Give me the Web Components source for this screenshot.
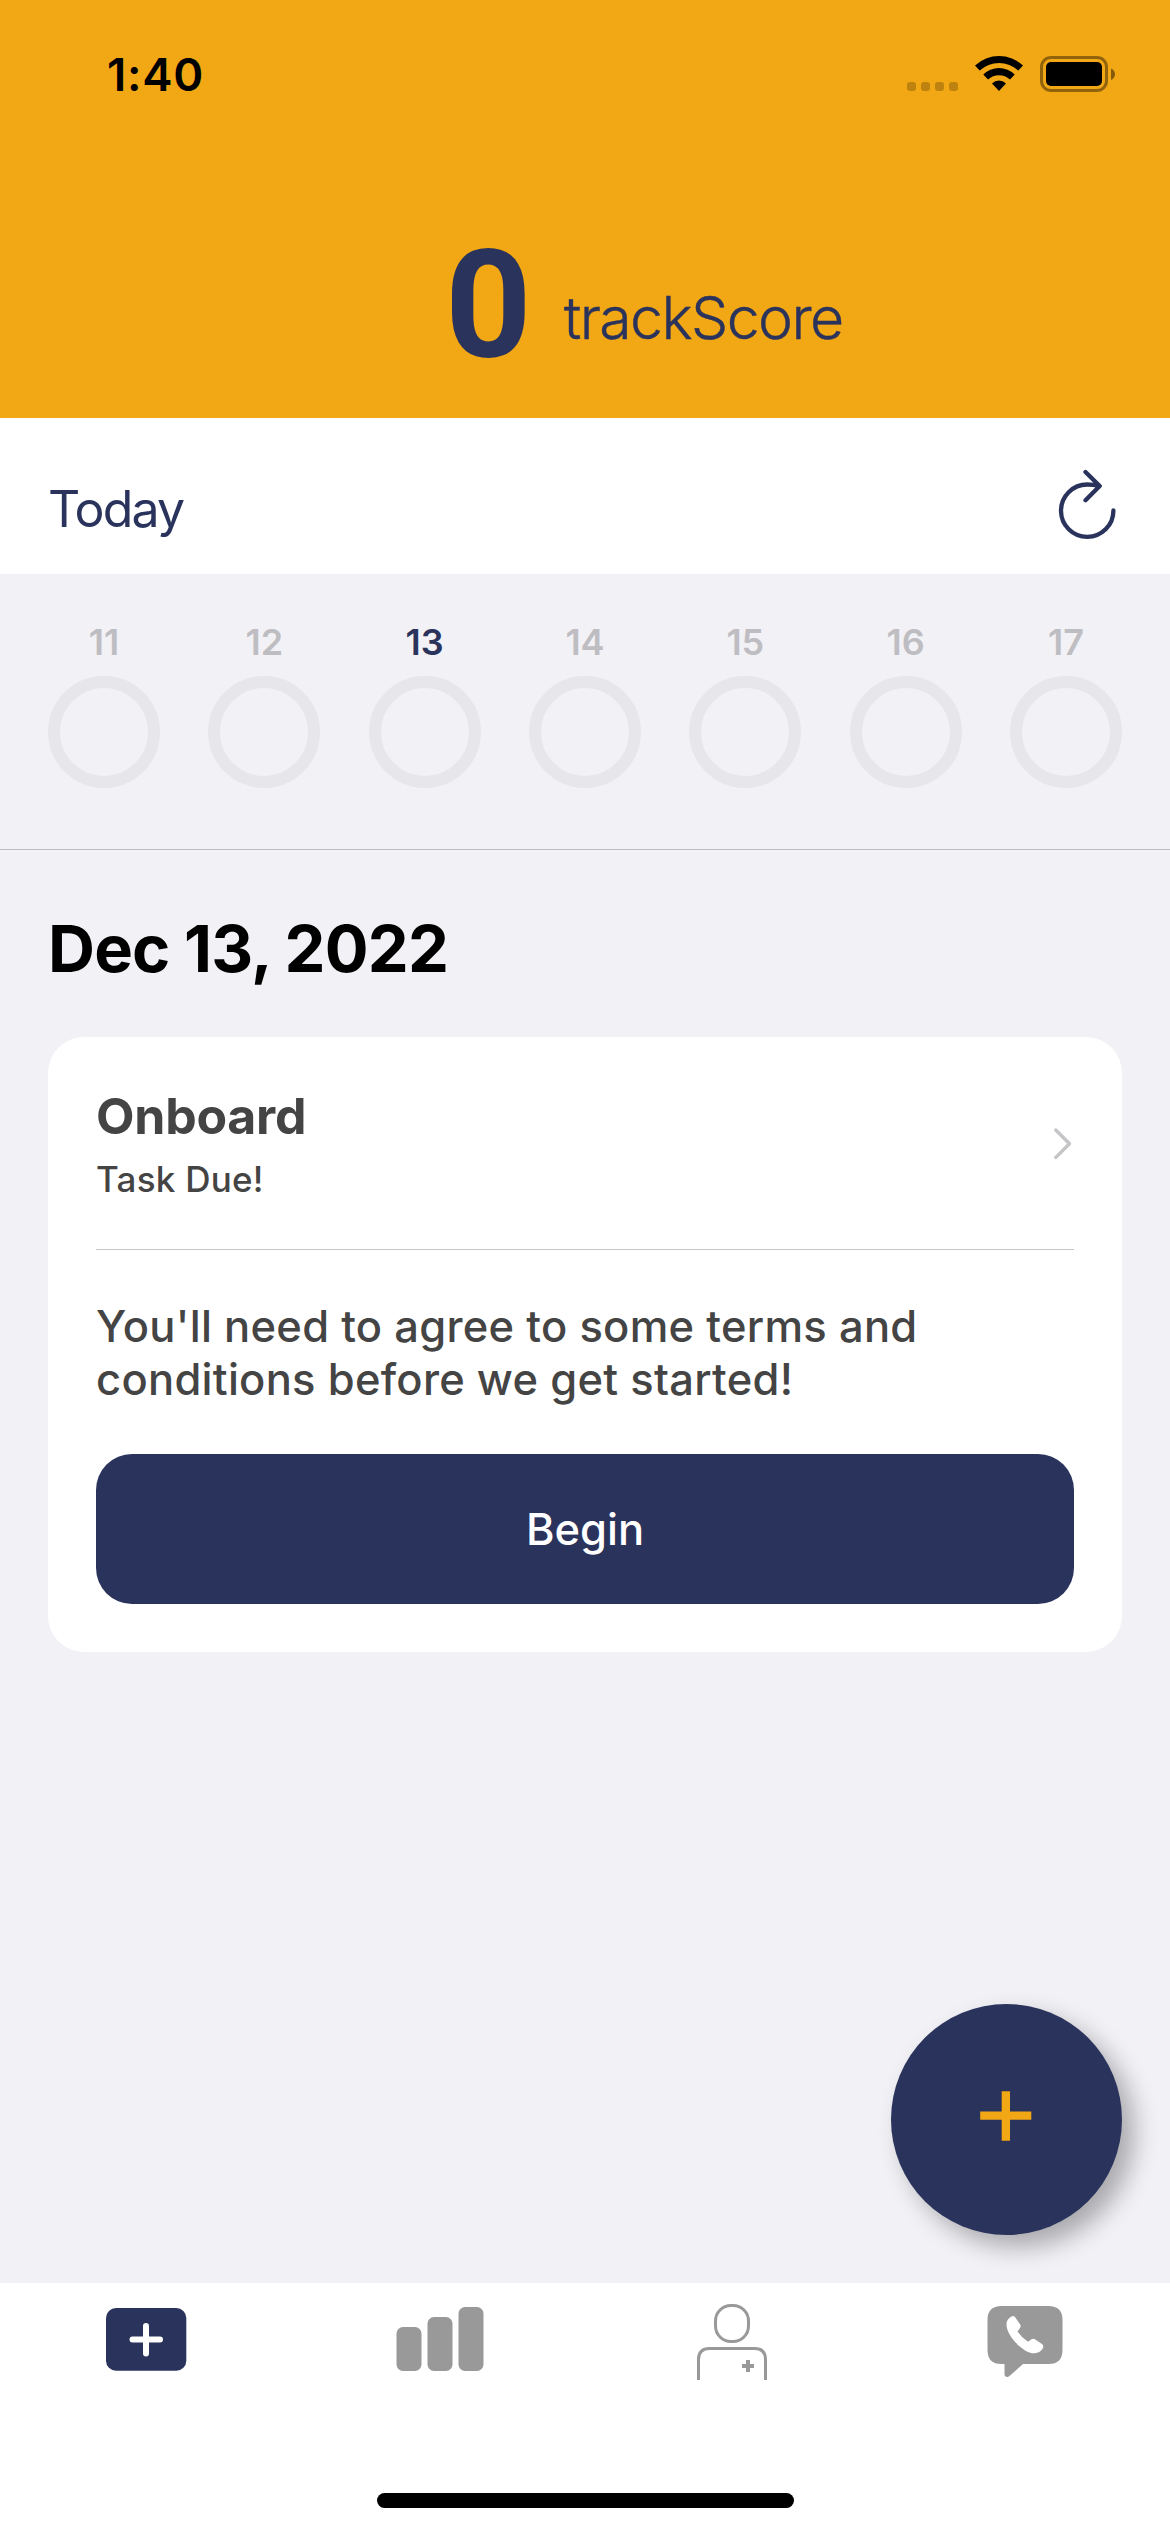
<!DOCTYPE html>
<html lang="en">
<head>
<meta charset="utf-8">
<title>trackScore</title>
<style>
html,body{margin:0;padding:0}
body{width:1170px;height:2532px;overflow:hidden;background:#f2f1f6;font-family:Inter,"Liberation Sans",sans-serif;--navy:#2a335c;--amber:#f2a714;--grey:#999}
</style>
</head>
<body>
<track-app></track-app>
<script>
const define=(name,html)=>customElements.define(name,class extends HTMLElement{
  constructor(){super();const t=document.createElement('template');t.innerHTML=html;this.attachShadow({mode:'open'}).append(t.content.cloneNode(true));}
});

define('status-bar',`<style>
:host{display:flex;height:150px;justify-content:space-between;box-sizing:border-box;padding:0 50px 0 107px}
.t{font-size:45.5px;font-weight:600;line-height:56px;margin-top:47px;color:#000;letter-spacing:.7px}
svg{display:block;margin-top:50px}
</style><div class="t"><slot></slot></div>
<svg width="220" height="50" viewBox="900 50 220 50">
<g fill="#000" fill-opacity=".22"><rect x="907" y="82" width="9" height="9" rx="3"/><rect x="921" y="82" width="9" height="9" rx="3"/><rect x="935" y="82" width="9" height="9" rx="3"/><rect x="949" y="82" width="9" height="9" rx="3"/></g>
<path d="M975 65.5A35 35 0 0 1 1023 65.5L1018.3 70.6A28.5 28.5 0 0 0 979.7 70.6ZM983.3 74.4A22.5 22.5 0 0 1 1014.7 74.4L1010 79.6A16 16 0 0 0 988 79.6ZM992 83.4A10.2 10.2 0 0 1 1006 83.4L999 91Z"/>
<rect x="1041.5" y="57.500" width="65" height="33" rx="9.500" fill="none" stroke="#000" stroke-opacity=".4" stroke-width="3"/>
<rect x="1046" y="62" width="56" height="24" rx="5"/>
<path d="M1111 68.500Q1115 70.500 1115 74.200T1111 80Z" fill-opacity=".45"/></svg>`);

define('score-header',`<style>
:host{display:block;height:418px;background:var(--amber);color:var(--navy)}
.r{display:flex;align-items:flex-start;padding-left:445px;height:268px}
.n{font:700 151px/180px Roboto,sans-serif;margin-top:66px}
.l{font-size:59px;font-weight:300;line-height:70px;margin:133px 0 0 32px;letter-spacing:-1.6px;-webkit-text-stroke:.4px currentColor}
</style><slot name="status"></slot><div class="r"><span class="n"><slot name="score"></slot></span><span class="l"><slot></slot></span></div>`);

define('today-bar',`<style>
:host{display:flex;height:156px;background:#fff;color:var(--navy);justify-content:space-between;box-sizing:border-box;padding:0 48px}
.t{font-size:50px;line-height:60px;margin-top:61px;letter-spacing:-1.8px}
svg{display:block;margin-top:46px}
</style><div class="t"><slot></slot></div>
<svg width="72" height="80" viewBox="1050 464 72 80" fill="none" stroke="#2a335c" stroke-width="4.300" stroke-linecap="round" stroke-linejoin="round"><path d="M1113.400 510.500A26.200 26.200 0 1 1 1087.200 484.500Q1093 484.500 1099.500 486M1085.500 472L1099.700 486L1085.500 500.300"/></svg>`);

define('day-ring',`<style>
:host{display:flex;flex-direction:column;align-items:center;width:112px;color:#bebdc2}
:host([selected]){color:var(--navy)}
.n{font-size:36px;font-weight:600;line-height:44px;margin-top:46px}
.c{box-sizing:border-box;width:112px;height:112px;border:12px solid #e7e6eb;border-radius:50%;margin-top:12px}
</style><div class="n"><slot></slot></div><div class="c"></div>`);

define('week-strip',`<style>
:host{display:flex;justify-content:space-between;height:276px;box-sizing:border-box;padding:0 48px;border-bottom:1px solid #bebdc3}
</style><slot></slot>`);

define('date-title',`<style>
:host{display:block;height:187px;box-sizing:border-box;padding:60px 0 0 48px;font-size:65px;line-height:78px;font-weight:700;color:#000;letter-spacing:-.8px}
</style><slot></slot>`);

define('task-card',`<style>
:host{display:block;margin:0 48px;height:615px;box-sizing:border-box;padding:0 48px;background:#fff;border-radius:36px;color:#444}
.h{display:flex;justify-content:space-between;height:212px;border-bottom:1px solid #c6c5c9}
.t{font-size:50px;line-height:60px;font-weight:700;margin-top:49px;letter-spacing:-.25px}
.s{font-size:35px;line-height:44px;font-weight:500;margin-top:11px;letter-spacing:.25px}
svg{display:block;margin-top:86px}
.p{font-size:43.5px;line-height:53px;font-weight:500;margin-top:50px;letter-spacing:.28px;height:154px;white-space:nowrap}
</style><div class="h"><div><div class="t"><slot name="title"></slot></div><div class="s"><slot name="sub"></slot></div></div>
<svg width="24" height="40" viewBox="1050 1123 24 40" fill="none" stroke="#c5c5c7" stroke-width="3.400" stroke-linecap="round" stroke-linejoin="round"><path d="M1055.800 1130L1069.500 1143.700L1055.800 1157.400"/></svg></div>
<div class="p"><slot></slot></div><slot name="action"></slot>`);

define('primary-button',`<style>
:host{display:flex;height:150px;border-radius:36px;background:var(--navy);color:#fff;align-items:center;justify-content:center;font-size:43.5px;font-weight:500;line-height:52px}
</style><slot></slot>`);

define('add-button',`<style>
:host{position:absolute;left:891px;top:2004px;width:231px;height:231px;border-radius:50%;background:var(--navy);box-shadow:12px 12px 24px rgba(0,0,0,.3)}
svg{display:block}
</style><svg width="231" height="231" viewBox="891 2004 231 231" fill="#f2a714"><path d="M1001.700 2091.200h8.300v20.300h21.300v8.300h-21.300v21h-8.300v-21h-21.500v-8.300h21.500z"/></svg>`);

define('tab-bar',`<style>
:host{display:flex;flex-direction:column;justify-content:space-between;align-items:center;height:249px;background:#fff}
.r{display:flex;width:100%}svg{display:block;flex:1;min-width:0}
.h{width:417px;height:15px;border-radius:8px;background:#000;margin-bottom:24px}
</style><div class="r">
<svg height="120" viewBox="0 2283 292.500 120"><rect x="106" y="2308" width="80.300" height="62.800" rx="10" fill="#2a335c"/><path d="M132.500 2339.600h27.500M146 2326v27.500" stroke="#fff" stroke-width="6" stroke-linecap="round"/></svg>
<svg height="120" viewBox="292.500 2283 292.500 120" fill="#999"><rect x="396" y="2327" width="25" height="44" rx="6.500"/><rect x="427" y="2317" width="25" height="54" rx="6.500"/><rect x="458" y="2307" width="25" height="64" rx="6.500"/></svg>
<svg height="120" viewBox="585 2283 292.500 120" fill="none" stroke="#999" stroke-width="3"><rect x="715.500" y="2305.500" width="33" height="36" rx="15.500"/><path d="M698.500 2380V2359.500Q698.500 2348.500 709.500 2348.500H754.500Q765.500 2348.500 765.500 2359.500V2380"/><path d="M742 2366h12M748 2360v12" stroke-width="4"/></svg>
<svg height="120" viewBox="877.500 2283 292.500 120" fill="#999"><path d="M1001 2306H1048Q1062 2306 1062 2320V2350Q1062 2364 1048 2364H1022.500L1009 2376Q1006.500 2378 1004.500 2376Q1004 2375 1004 2374V2364H1001Q987 2364 987 2350V2320Q987 2306 1001 2306Z"/><path fill="#fff" d="M1011 2316.500Q1013 2315.500 1014.500 2317L1020 2325Q1020.500 2326.500 1019.500 2328L1017 2331.500Q1021 2337.500 1027.500 2341.800L1031 2339.200Q1032.500 2338.300 1034 2339L1041.500 2344Q1043.500 2345.500 1042.500 2348Q1040 2353 1034 2353.200C1024 2354 1006 2336.500 1006 2324.500Q1006 2319 1011 2316.500Z"/></svg>
</div><div class="h"></div>`);

define('track-app',`<style>
:host{display:flex;flex-direction:column;position:relative;width:1170px;height:2532px;background:#f2f1f6}
main{flex:1}
</style>
<score-header><status-bar slot="status">1:40</status-bar><span slot="score">0</span>trackScore</score-header>
<today-bar>Today</today-bar>
<week-strip><day-ring>11</day-ring><day-ring>12</day-ring><day-ring selected>13</day-ring><day-ring>14</day-ring><day-ring>15</day-ring><day-ring>16</day-ring><day-ring>17</day-ring></week-strip>
<main><date-title>Dec 13, 2022</date-title>
<task-card><span slot="title">Onboard</span><span slot="sub">Task Due!</span>You'll need to agree to some terms and<br>conditions before we get started!<primary-button slot="action">Begin</primary-button></task-card></main>
<tab-bar></tab-bar><add-button></add-button>`);
</script>
</body>
</html>
